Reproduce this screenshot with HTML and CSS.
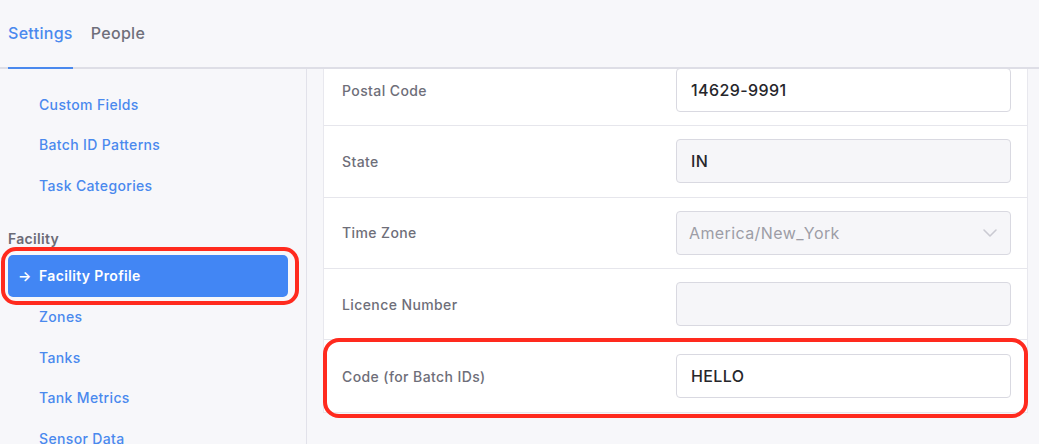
FILE: index.html
```html
<!DOCTYPE html>
<html>
<head>
<meta charset="utf-8">
<link rel="stylesheet" href="styles.css">
</head>
<body>
<div class="app">
  <header class="tabs">
    <div class="tab active">Settings</div>
    <div class="tab">People</div>
  </header>
  <div class="layout">
    <aside class="sidebar">
      <nav class="group">
        <a class="nav-item"><span class="arrow"></span>Custom Fields</a>
        <a class="nav-item"><span class="arrow"></span>Batch ID Patterns</a>
        <a class="nav-item"><span class="arrow"></span>Task Categories</a>
      </nav>
      <div class="group-title">Facility</div>
      <nav class="group">
        <a class="nav-item current highlighted"><span class="arrow">→</span>Facility Profile</a>
        <a class="nav-item"><span class="arrow"></span>Zones</a>
        <a class="nav-item"><span class="arrow"></span>Tanks</a>
        <a class="nav-item"><span class="arrow"></span>Tank Metrics</a>
        <a class="nav-item"><span class="arrow"></span>Sensor Data</a>
      </nav>
    </aside>
    <main class="main">
      <section class="card">
        <div class="row">
          <div class="label">Postal Code</div>
          <div class="field">14629-9991</div>
        </div>
        <div class="row">
          <div class="label">State</div>
          <div class="field readonly">IN</div>
        </div>
        <div class="row">
          <div class="label">Time Zone</div>
          <div class="field readonly select">
            <span class="placeholder">America/New_York</span>
            <svg class="chev" width="16" height="10" viewBox="0 0 16 10"><polyline points="2,2 8,8 14,2" fill="none" stroke="#cacad2" stroke-width="1.6" stroke-linecap="round" stroke-linejoin="round"/></svg>
          </div>
        </div>
        <div class="row">
          <div class="label">Licence Number</div>
          <div class="field readonly"></div>
        </div>
        <div class="row last highlighted-row">
          <div class="label">Code (for Batch IDs)</div>
          <div class="field">HELLO</div>
        </div>
      </section>
    </main>
  </div>
</div>
</body>
</html>
```
FILE: styles.css
```css
* { box-sizing: border-box; }
html, body { margin: 0; padding: 0; }
body {
  width: 1039px;
  height: 444px;
  overflow: hidden;
  background: #f7f7fa;
  font-family: "Inter", "Lato", sans-serif;
  color: #2a2a30;
}
.app { display: flex; flex-direction: column; height: 444px; }
.tabs {
  height: 69px;
  flex: 0 0 69px;
  display: flex;
  gap: 18px;
  padding-left: 8px;
  border-bottom: 2px solid #dedee6;
}
.tab {
  display: flex;
  align-items: center;
  font-size: 16px;
  font-weight: 500;
  letter-spacing: 0.3px;
  color: #6f6f7a;
  padding-bottom: 2px;
  margin-bottom: -2px;
  border-bottom: 2px solid transparent;
}
.tab.active { color: #4a89ee; border-bottom-color: #4a89ee; }
.layout { flex: 1; display: flex; min-height: 0; }
.sidebar {
  width: 307px;
  flex: 0 0 307px;
  border-right: 1px solid #e2e2ea;
  padding: 15px 18px 0 8px;
}
.group { display: flex; flex-direction: column; }
.nav-item {
  position: relative;
  display: flex;
  align-items: center;
  height: 40.5px;
  padding-left: 10px;
  font-size: 14px;
  font-weight: 500;
  letter-spacing: 0.35px;
  color: #4a89ee;
  border-radius: 5px;
  white-space: nowrap;
}
.arrow { width: 21px; flex: 0 0 21px; font-size: 14px; letter-spacing: 0; }
.nav-item.current {
  height: 42px;
  background: #4286f4;
  color: #fff;
  font-weight: 600;
}
.highlighted::after {
  content: "";
  position: absolute;
  left: -7px;
  top: -8px;
  right: -11px;
  bottom: -8px;
  border: 4px solid #ff2a1e;
  border-radius: 15px;
}
.group-title {
  margin-top: 21px;
  height: 24px;
  margin-bottom: 4px;
  display: flex;
  align-items: center;
  font-size: 14px;
  font-weight: 600;
  letter-spacing: 0.3px;
  color: #6b6b76;
}
.main {
  flex: 1;
  overflow: hidden;
  padding: 0 11px 0 16px;
}
.card {
  margin-top: -14px;
  background: #fff;
  border: 1px solid #e8e8ee;
  border-top: none;
}
.row {
  position: relative;
  height: 71.3px;
  display: flex;
  align-items: center;
  padding: 0 16px 0 18px;
  border-bottom: 1px solid #e6e6ec;
}
.row.last { border-bottom: none; height: 72px; }
.label {
  flex: 1;
  font-size: 14px;
  font-weight: 500;
  letter-spacing: 0.4px;
  color: #6e6e79;
}
.field {
  width: 335px;
  height: 44px;
  border: 1px solid #d9d9e1;
  border-radius: 4px;
  background: #fff;
  display: flex;
  align-items: center;
  padding-left: 14px;
  font-size: 16px;
  font-weight: 500;
  letter-spacing: 0.4px;
  color: #26262b;
}
.field.readonly { background: #f6f6f9; }
.select { justify-content: space-between; padding-left: 12px; padding-right: 12px; }
.placeholder { color: #9d9da6; font-weight: 400; }
.chev { display: block; }
.highlighted-row::after {
  content: "";
  position: absolute;
  left: -1px;
  right: -1px;
  top: -2px;
  bottom: -6px;
  border: 4px solid #ff2a1e;
  border-radius: 16px;
}
```
